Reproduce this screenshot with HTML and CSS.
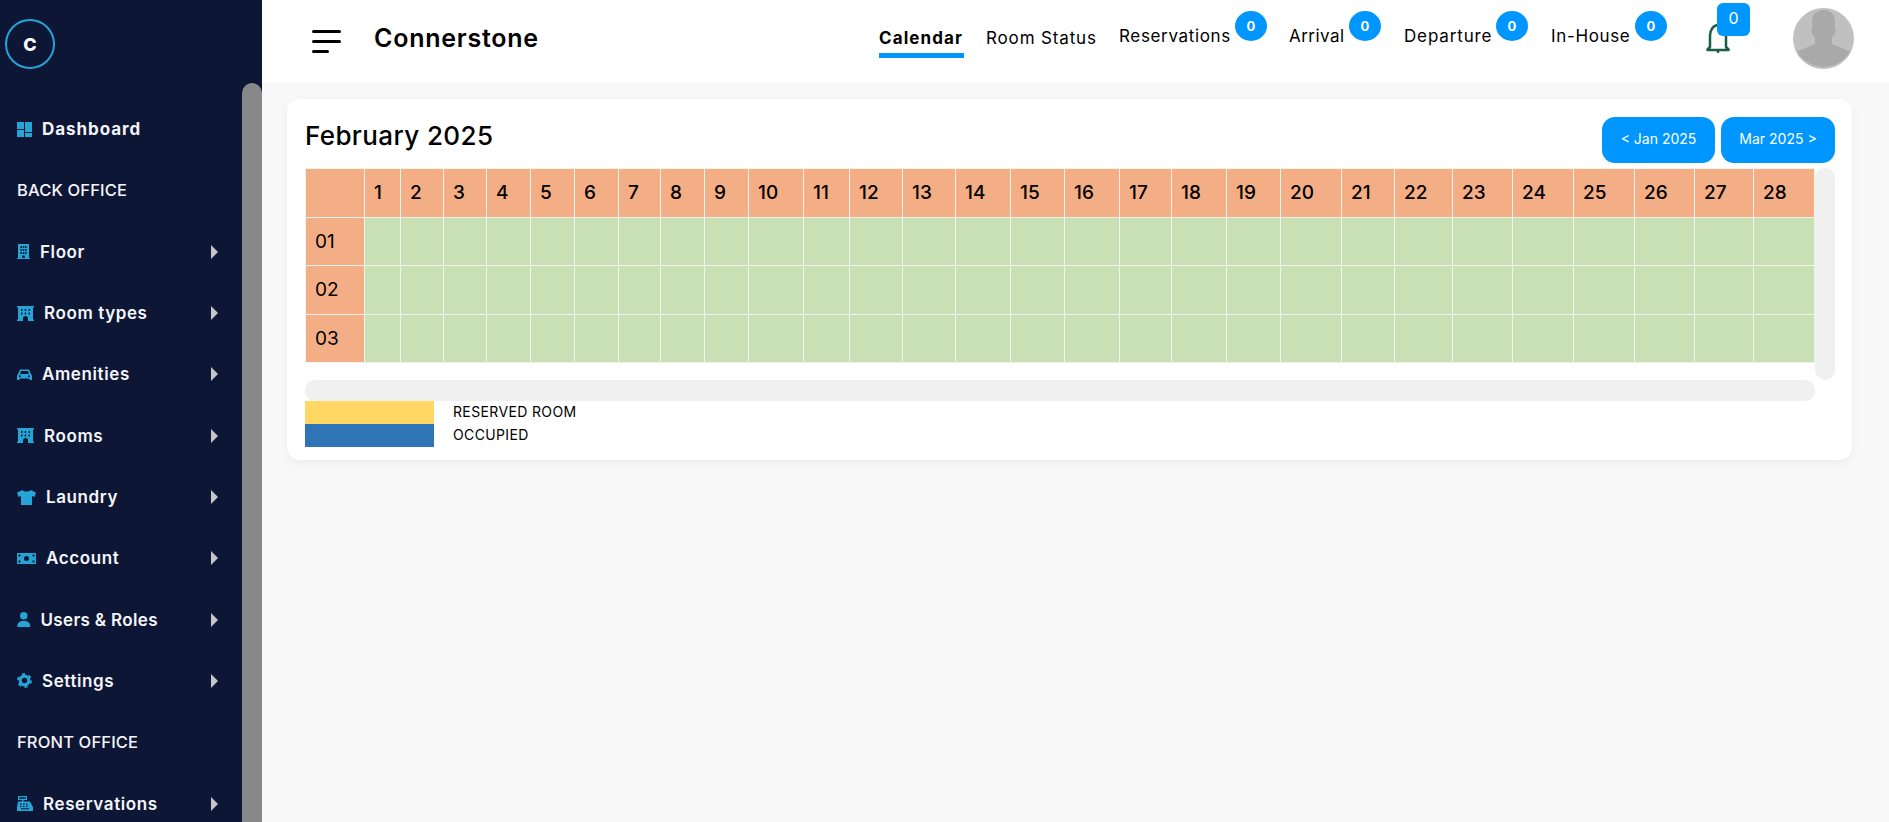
FILE: index.html
```html
<!DOCTYPE html>
<html lang="en">
<head>
<meta charset="utf-8">
<title>Connerstone - Calendar</title>
<link rel="stylesheet" href="styles.css">
</head>
<body>
<div class="app">
  <aside class="sidebar">
    <div class="logo"><span class="logo-mark">C</span></div>
    <ul class="menu">
      <li class="menu-row menu-strong"><svg class="ic ic-dash" viewBox="0 0 15 15"><path d="M0 0h7v7H0zM0 8h7v7H0zM8 0h7v10H8zM8 11h7v4H8z"/></svg><span class="menu-label">Dashboard</span></li>
      <li class="menu-row menu-head">BACK OFFICE</li>
      <li class="menu-row"><svg class="ic ic-floor" viewBox="0 0 13 15"><path fill-rule="evenodd" d="M1 0h11v14h1v1H0v-1h1zM3.500 2v2h1.500V2zM5.800 2v2h1.500V2zM8.100 2v2h1.500V2zM3.500 5v2h1.500V5zM5.800 5v2h1.500V5zM8.100 5v2h1.500V5zM3.500 8v2h1.500V8zM5.800 8v2h1.500V8zM8.100 8v2h1.500V8zM5.200 11.500V14h2.600v-2.500z"/></svg><span class="menu-label">Floor</span><span class="caret"></span></li>
      <li class="menu-row"><svg class="ic ic-hotel" viewBox="0 0 17 15"><path fill-rule="evenodd" d="M0 0h17v1.500h-1V13.500h1V15h-6v-2.500a2.500 2.500 0 0 0-5 0V15H0v-1.500h1V1.500H0zM4 3v2h1.500V3zM7.700 3v2h1.500V3zM11.500 3v2H13V3zM4 6.500v2h1.500v-2zM7.700 6.500v2h1.500v-2zM11.500 6.500v2H13v-2z"/></svg><span class="menu-label">Room types</span><span class="caret"></span></li>
      <li class="menu-row"><svg class="ic ic-car" viewBox="0 0 15 11"><path fill-rule="evenodd" d="M3 .5h9l2 4.500q1 1 1 2V11h-2.500V9.500h-10V11H0V7q0-1 1-2zM4 2 3 5h9l-1-3zM2 6.500v1.500h2V6.500zM11 6.500v1.500h2V6.500z"/></svg><span class="menu-label">Amenities</span><span class="caret"></span></li>
      <li class="menu-row"><svg class="ic ic-hotel" viewBox="0 0 17 15"><path fill-rule="evenodd" d="M0 0h17v1.500h-1V13.500h1V15h-6v-2.500a2.500 2.500 0 0 0-5 0V15H0v-1.500h1V1.500H0zM4 3v2h1.500V3zM7.700 3v2h1.500V3zM11.500 3v2H13V3zM4 6.500v2h1.500v-2zM7.700 6.500v2h1.500v-2zM11.500 6.500v2H13v-2z"/></svg><span class="menu-label">Rooms</span><span class="caret"></span></li>
      <li class="menu-row"><svg class="ic ic-shirt" viewBox="0 0 19 15"><path d="M5.500 0 0 2.500 1.500 7 4 6v9h11V6l2.500 1L19 2.500 13.500 0c-1 2-7 2-8 0z"/></svg><span class="menu-label">Laundry</span><span class="caret"></span></li>
      <li class="menu-row"><svg class="ic ic-money" viewBox="0 0 19 11"><path fill-rule="evenodd" d="M0 0h19v11H0zM9.500 3a2.500 2.500 0 1 0 0 5 2.500 2.500 0 0 0 0-5zM1.500 1.500v2h2v-2zM15.500 1.500v2h2v-2zM1.500 7.500v2h2v-2zM15.500 7.500v2h2v-2z"/></svg><span class="menu-label">Account</span><span class="caret"></span></li>
      <li class="menu-row menu-tight"><svg class="ic ic-user" viewBox="0 0 448 512"><path d="M224 256A128 128 0 1 0 224 0a128 128 0 1 0 0 256zm-45.700 48C79.800 304 0 383.800 0 482.300C0 498.700 13.300 512 29.700 512H418.300c16.400 0 29.700-13.300 29.700-29.700C448 383.800 368.200 304 269.700 304H178.300z"/></svg><span class="menu-label">Users &amp; Roles</span><span class="caret"></span></li>
      <li class="menu-row"><svg class="ic ic-gear" viewBox="0 0 15 15"><circle class="gear-ring" cx="7.500" cy="7.500" r="4.300"/><circle class="gear-teeth" cx="7.500" cy="7.500" r="6.300"/></svg><span class="menu-label">Settings</span><span class="caret"></span></li>
      <li class="menu-row menu-head">FRONT OFFICE</li>
      <li class="menu-row"><svg class="ic ic-till" viewBox="0 0 16 15"><path fill-rule="evenodd" d="M1 0h9v4H6.500v1.500H13l3 5.500v4H0v-4l1-5.500h4V4H1zM2.300 1.200v1.600h6.400V1.200zM3 7.500v1.200h1.500V7.500zM6 7.500v1.200h1.500V7.500zM9 7.500v1.200h1.500V7.500zM3 9.700v1.200h1.500V9.700zM6 9.700v1.200h1.500V9.700zM9 9.700v1.200h1.500V9.700zM4 12.300v1h8v-1z"/></svg><span class="menu-label">Reservations</span><span class="caret"></span></li>
    </ul>
    <div class="sidebar-thumb"></div>
  </aside>

  <div class="content">
    <header class="topbar">
      <div class="burger"><span class="burger-line"></span><span class="burger-line"></span><span class="burger-line burger-short"></span></div>
      <div class="brand">Connerstone</div>
      <nav class="nav">
        <a class="nav-item nav-active nav-cal">Calendar</a>
        <a class="nav-item nav-low nav-status">Room Status</a>
        <a class="nav-item nav-res">Reservations<span class="badge">0</span></a>
        <a class="nav-item nav-arr">Arrival<span class="badge">0</span></a>
        <a class="nav-item nav-dep">Departure<span class="badge">0</span></a>
        <a class="nav-item nav-inh">In-House<span class="badge">0</span></a>
      </nav>
      <div class="bell">
        <svg class="bell-icon" viewBox="0 0 24 30"><path d="M4 24V12.500C4 7 7.500 2 12 2s8 5 8 10.500V24l2.500 2.500V27H1.500v-.5zM12 27v2"/></svg>
        <span class="bell-badge">0</span>
      </div>
      <svg class="avatar" viewBox="0 0 61 61">
        <circle class="avatar-bg" cx="30.500" cy="30.500" r="30.500"/>
        <path class="avatar-fig" d="M30.500 2c7 0 11.500 5 11.500 11 0 3 0 5-.5 7 1.500 1 1.500 4 0 6l-2.500 3v7l18 7.500a30.500 30.500 0 0 1-53 0L22 36v-7l-2.500-3c-1.500-2-1.500-5 0-6-.5-2-.5-4-.5-7 0-6 4.500-11 11.500-11z"/>
      </svg>
    </header>

    <main class="main">
      <section class="card">
        <div class="card-head">
          <h1 class="month">February 2025</h1>
          <div class="pager">
            <a class="pager-btn pager-prev">&lt; Jan 2025</a>
            <a class="pager-btn pager-next">Mar 2025 &gt;</a>
          </div>
        </div>
        <div class="cal-area">
          <table class="cal">
            <colgroup>
              <col><col><col><col><col><col><col><col><col><col><col><col><col><col><col><col><col><col><col><col><col><col><col><col><col><col><col><col><col>
            </colgroup>
            <thead>
              <tr><th></th><th>1</th><th>2</th><th>3</th><th>4</th><th>5</th><th>6</th><th>7</th><th>8</th><th>9</th><th>10</th><th>11</th><th>12</th><th>13</th><th>14</th><th>15</th><th>16</th><th>17</th><th>18</th><th>19</th><th>20</th><th>21</th><th>22</th><th>23</th><th>24</th><th>25</th><th>26</th><th>27</th><th>28</th></tr>
            </thead>
            <tbody>
              <tr><th>01</th><td></td><td></td><td></td><td></td><td></td><td></td><td></td><td></td><td></td><td></td><td></td><td></td><td></td><td></td><td></td><td></td><td></td><td></td><td></td><td></td><td></td><td></td><td></td><td></td><td></td><td></td><td></td><td></td></tr>
              <tr><th>02</th><td></td><td></td><td></td><td></td><td></td><td></td><td></td><td></td><td></td><td></td><td></td><td></td><td></td><td></td><td></td><td></td><td></td><td></td><td></td><td></td><td></td><td></td><td></td><td></td><td></td><td></td><td></td><td></td></tr>
              <tr><th>03</th><td></td><td></td><td></td><td></td><td></td><td></td><td></td><td></td><td></td><td></td><td></td><td></td><td></td><td></td><td></td><td></td><td></td><td></td><td></td><td></td><td></td><td></td><td></td><td></td><td></td><td></td><td></td><td></td></tr>
            </tbody>
          </table>
          <div class="vbar"></div>
          <div class="hbar"></div>
        </div>
        <div class="legend">
          <div class="legend-row"><span class="swatch swatch-res"></span><span class="legend-text">RESERVED ROOM</span></div>
          <div class="legend-row"><span class="swatch swatch-occ"></span><span class="legend-text">OCCUPIED</span></div>
        </div>
      </section>
    </main>
  </div>
</div>
</body>
</html>
```

FILE: styles.css
```css
* { box-sizing: border-box; }
html, body { margin: 0; height: 100%; overflow: hidden; }
body { font-family: Inter, "Open Sans", sans-serif; color: #000; background: #f8f8f8; }
ul { list-style: none; margin: 0; padding: 0; }
h1 { margin: 0; }

.app { display: flex; height: 822px; overflow: hidden; }

/* Sidebar */
.sidebar { position: relative; flex: 0 0 262px; height: 822px; overflow: hidden; background: #0d1635; padding: 0 0 0 17px; }
.logo { height: 98.500px; padding-top: 19px; margin-left: -12px; }
.logo-mark { display: flex; align-items: center; justify-content: center; width: 50px; height: 50px; border: 2px solid #27a4d6; border-radius: 50%; color: #fff; font-weight: 800; font-size: 18px; }
.menu-row { display: flex; align-items: center; height: 61.320px; color: #f4f5f8; font-size: 17px; font-weight: 600; letter-spacing: .6px; white-space: nowrap; }
.menu-strong { font-weight: 700; letter-spacing: .95px; }
.menu-tight { letter-spacing: .35px; }
.menu-head { font-size: 16.500px; font-weight: 500; letter-spacing: .15px; }
.menu-label { margin-left: 10px; }
.ic { display: block; flex: none; fill: #27a4d6; }
.ic-dash { width: 15px; height: 15px; }
.ic-floor { width: 13px; height: 15px; }
.ic-hotel { width: 17px; height: 15px; }
.ic-car { width: 15px; height: 11px; }
.ic-shirt { width: 19px; height: 15px; }
.ic-money { width: 19px; height: 11px; }
.ic-user { width: 13.500px; height: 15px; }
.ic-gear { width: 15px; height: 15px; }
.ic-till { width: 16px; height: 15px; }
.gear-ring { fill: none; stroke: #27a4d6; stroke-width: 3.200; }
.gear-teeth { fill: none; stroke: #27a4d6; stroke-width: 2.200; stroke-dasharray: 3 3.600; }
.caret { margin-left: auto; margin-right: 44px; width: 0; height: 0; border-style: solid; border-width: 7px 0 7px 7px; border-color: transparent transparent transparent #c4c5c9; }
.sidebar-thumb { position: absolute; top: 83px; right: 0; width: 20px; height: 800px; border-radius: 10px; background: #888; }

/* Top bar */
.content { flex: 1; min-width: 0; display: flex; flex-direction: column; }
.topbar { flex: 0 0 83px; display: flex; align-items: center; background: #fff; padding: 0 35px 0 50px; }
.burger { display: flex; flex-direction: column; gap: 7px; width: 29px; margin-right: 33px; }
.burger-line { height: 3px; border-radius: 2px; background: #000; }
.burger-short { width: 17px; }
.brand { font-size: 25px; font-weight: 600; letter-spacing: .75px; margin-top: -7px; }
.nav { display: flex; align-self: flex-start; margin-left: auto; padding-top: 24px; font-size: 17px; }
.nav-item { position: relative; display: block; line-height: 24px; white-space: nowrap; color: #000; }
.nav-active { font-weight: 700; margin-top: 2px; padding-bottom: 3px; border-bottom: 5px solid #0096ff; }
.nav-low { margin-top: 2px; }
.nav-cal { width: 85px; margin-right: 22px; letter-spacing: 1.100px; }
.nav-status { width: 110px; margin-right: 23px; letter-spacing: .85px; }
.nav-res { width: 111px; margin-right: 59px; letter-spacing: .65px; }
.nav-arr { width: 55px; margin-right: 60px; letter-spacing: .45px; }
.nav-dep { width: 87px; margin-right: 60px; letter-spacing: .85px; }
.nav-inh { width: 79px; margin-right: 76px; letter-spacing: .65px; }
.badge { position: absolute; top: -13px; left: 100%; margin-left: 5px; width: 32px; height: 30px; border-radius: 50%; background: #0096ff; color: #fff; font-size: 13px; font-weight: 700; letter-spacing: 0; line-height: 30px; text-align: center; }
.bell { position: relative; width: 24px; height: 30px; margin-right: 63px; margin-top: -8px; }
.bell-icon { display: block; width: 24px; height: 30px; fill: none; stroke: #1a5e4a; stroke-width: 2.500; stroke-linejoin: round; stroke-linecap: round; }
.bell-badge { position: absolute; top: -20px; left: 11px; width: 33px; height: 33px; border-radius: 6px; background: #0096ff; color: #fff; font-size: 16px; line-height: 31px; text-align: center; }
.avatar { display: block; flex: none; width: 61px; height: 61px; margin-top: -6px; }
.avatar-bg { fill: #c0c0c0; }
.avatar-fig { fill: #a9a9a9; }

/* Main */
.main { flex: 1; padding: 16px 37px 0 25px; }
.card { background: #fff; border-radius: 13px; padding: 18px 17px 13px 18px; box-shadow: 0 3px 10px rgba(0, 0, 0, .05); }
.card-head { display: flex; align-items: flex-start; justify-content: space-between; margin-bottom: 5px; }
.month { font-size: 26px; font-weight: 500; letter-spacing: .38px; line-height: 38px; }
.pager { display: flex; gap: 6px; }
.pager-btn { display: block; height: 46px; border-radius: 13px; background: #0096ff; color: #fff; font-size: 14px; line-height: 43px; text-align: center; white-space: nowrap; }
.pager-prev { width: 113px; }
.pager-next { width: 114px; }

.cal-area { display: grid; grid-template-columns: 1510px 20px; grid-template-rows: 212px 21px; }
.cal { grid-column: 1; grid-row: 1; align-self: start; width: 1510px; border-collapse: collapse; table-layout: fixed; }
.cal th, .cal td { border: 1px solid #f1f3ef; padding: 0; height: 48.600px; }
.cal th { background: #f4ae85; font-size: 19px; font-weight: 500; text-align: left; padding-left: 9px; }
.cal tbody th { font-size: 19px; font-weight: 400; padding-left: 9px; }
.cal td { background: #c8e0b3; }
.cal col:nth-child(1) { width: 59px; }
.cal col:nth-child(2) { width: 36px; }
.cal col:nth-child(3) { width: 43px; }
.cal col:nth-child(4) { width: 43px; }
.cal col:nth-child(5) { width: 44px; }
.cal col:nth-child(6) { width: 44px; }
.cal col:nth-child(7) { width: 44px; }
.cal col:nth-child(8) { width: 42px; }
.cal col:nth-child(9) { width: 44px; }
.cal col:nth-child(10) { width: 44px; }
.cal col:nth-child(11) { width: 55px; }
.cal col:nth-child(12) { width: 46px; }
.cal col:nth-child(13) { width: 53px; }
.cal col:nth-child(14) { width: 53px; }
.cal col:nth-child(15) { width: 55px; }
.cal col:nth-child(16) { width: 54px; }
.cal col:nth-child(17) { width: 55px; }
.cal col:nth-child(18) { width: 52px; }
.cal col:nth-child(19) { width: 55px; }
.cal col:nth-child(20) { width: 54px; }
.cal col:nth-child(21) { width: 61px; }
.cal col:nth-child(22) { width: 53px; }
.cal col:nth-child(23) { width: 58px; }
.cal col:nth-child(24) { width: 60px; }
.cal col:nth-child(25) { width: 61px; }
.cal col:nth-child(26) { width: 61px; }
.cal col:nth-child(27) { width: 60px; }
.cal col:nth-child(28) { width: 59px; }
.cal col:nth-child(29) { width: 61px; }
.vbar { grid-column: 2; grid-row: 1; background: #f0f0f0; border-radius: 10px; }
.hbar { grid-column: 1; grid-row: 2; width: 1510px; background: #f0f0f0; border-radius: 10px; }

.legend { display: flex; flex-direction: column; }
.legend-row { display: flex; align-items: center; height: 23px; }
.swatch { display: block; width: 129px; height: 23px; margin-right: 19px; }
.swatch-res { background: #ffd762; }
.swatch-occ { background: #2f75b5; }
.legend-text { font-size: 14px; letter-spacing: .36px; line-height: 21px; margin-top: -2px; }
```
